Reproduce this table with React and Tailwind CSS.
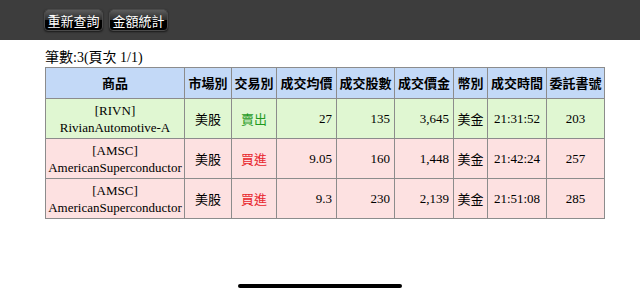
import React from 'react';

const rows = [
  { code: 'RIVN', name: 'RivianAutomotive-A', market: '美股', side: '賣出', price: '27', qty: '135', amt: '3,645', cur: '美金', time: '21:31:52', no: '203' },
  { code: 'AMSC', name: 'AmericanSuperconductor', market: '美股', side: '買進', price: '9.05', qty: '160', amt: '1,448', cur: '美金', time: '21:42:24', no: '257' },
  { code: 'AMSC', name: 'AmericanSuperconductor', market: '美股', side: '買進', price: '9.3', qty: '230', amt: '2,139', cur: '美金', time: '21:51:08', no: '285' },
];

const heads = [
  ['商品', 'w-[139px]'],
  ['市場別', 'w-[47px]'],
  ['交易別', 'w-[45px]'],
  ['成交均價', 'w-[60px]'],
  ['成交股數', 'w-[58px]'],
  ['成交價金', 'w-[59px]'],
  ['幣別', 'w-[34px]'],
  ['成交時間', 'w-[59px]'],
  ['委託書號', 'w-[58px]'],
];

const serif = "font-['Liberation_Serif','Noto_Sans_CJK_TC',serif]";
const cjk = "font-['Noto_Sans_CJK_TC',sans-serif]";

const GlossButton = ({ children }) => (
  <button className={`relative h-[22px] w-[59px] overflow-hidden rounded-[4px] border border-[#4a4a4a] bg-black text-[13px] leading-none text-white shadow-[0_1px_2px_rgba(0,0,0,0.6)] ${cjk}`}>
    <span className="absolute inset-x-0 top-0 h-1/2 bg-gradient-to-b from-[#5c5c5c] to-[#2e2e2e]"></span>
    <span className="relative">{children}</span>
  </button>
);

const App = () => {
  return (
    <div className="relative h-[296px] w-[640px] overflow-hidden bg-white">
      <div className="flex h-[40px] items-start gap-[6px] bg-[#3d3d3d] pl-[44px] pt-[9px]">
        <GlossButton>重新查詢</GlossButton>
        <GlossButton>金額統計</GlossButton>
      </div>

      <div className="pl-[45px]">
        <p className={`mt-[9px] h-[18px] overflow-hidden text-[14px] leading-[18px] text-black ${serif}`}>筆數:3(頁次 1/1)</p>

        <table className={`w-[559px] table-fixed border-collapse text-[13px] text-black ${serif}`}>
          <thead>
            <tr className="h-[31px] bg-[#c3d9f7]">
              {heads.map(([h, w]) => (
                <th key={h} className={`${w} border border-[#8c8c8c] p-0 text-center text-[13px] font-bold ${cjk}`}>{h}</th>
              ))}
            </tr>
          </thead>
          <tbody>
            {rows.map((r, i) => (
              <tr key={i} className={`h-[40px] ${r.side === '賣出' ? 'bg-[#e0f7d2]' : 'bg-[#fde1e1]'}`}>
                <td className="border border-[#8c8c8c] p-0 text-center text-[13px] leading-[17px]">
                  [{r.code}]<br />{r.name}
                </td>
                <td className={`border border-[#8c8c8c] p-0 text-center ${cjk}`}>{r.market}</td>
                <td className={`border border-[#8c8c8c] p-0 text-center ${cjk} ${r.side === '賣出' ? 'text-[#1f9a1f]' : 'text-[#e8242c]'}`}>{r.side}</td>
                <td className="border border-[#8c8c8c] p-0 pr-[4px] text-right">{r.price}</td>
                <td className="border border-[#8c8c8c] p-0 pr-[4px] text-right">{r.qty}</td>
                <td className="border border-[#8c8c8c] p-0 pr-[4px] text-right">{r.amt}</td>
                <td className={`border border-[#8c8c8c] p-0 text-center ${cjk}`}>{r.cur}</td>
                <td className="border border-[#8c8c8c] p-0 text-center">{r.time}</td>
                <td className="border border-[#8c8c8c] p-0 text-center">{r.no}</td>
              </tr>
            ))}
          </tbody>
        </table>
      </div>

      <div className="absolute bottom-[8px] left-[238px] h-[4px] w-[164px] rounded-full bg-black"></div>
    </div>
  );
};

export default App;
